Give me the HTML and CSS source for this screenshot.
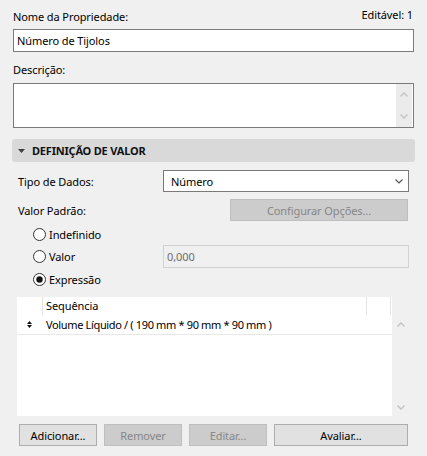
FILE: index.html
```html
<!DOCTYPE html>
<html lang="pt">
<head>
<meta charset="utf-8">
<link rel="stylesheet" href="styles.css">
</head>
<body>
<div class="dialog">
  <div class="head-row">
    <span>Nome da Propriedade:</span>
    <span class="editable">Editável: 1</span>
  </div>
  <div class="text-input">Número de Tijolos</div>
  <div class="label-desc">Descrição:</div>
  <div class="textarea">
    <div class="ta-scroll">
      <svg width="8" height="5" viewBox="0 0 8 5"><path d="M0.5 4.5 L4 1 L7.5 4.5" fill="none" stroke="#c2c2c2" stroke-width="1.3"/></svg>
      <svg width="8" height="5" viewBox="0 0 8 5"><path d="M0.5 0.5 L4 4 L7.5 0.5" fill="none" stroke="#c2c2c2" stroke-width="1.3"/></svg>
    </div>
  </div>

  <div class="section-head">
    <svg class="tri" width="7" height="4" viewBox="0 0 7 4"><path d="M0 0 H7 L3.5 4 Z" fill="#404040"/></svg>
    <span>DEFINIÇÃO DE VALOR</span>
  </div>

  <div class="section-body">
    <div class="row row-type">
      <span>Tipo de Dados:</span>
      <div class="dropdown">
        <span>Número</span>
        <svg width="8" height="5" viewBox="0 0 8 5"><path d="M0.5 0.5 L4 4 L7.5 0.5" fill="none" stroke="#555" stroke-width="1.2"/></svg>
      </div>
    </div>
    <div class="row row-default">
      <span>Valor Padrão:</span>
      <div class="btn btn-disabled btn-config">Configurar Opções...</div>
    </div>

    <div class="radio-row r1">
      <div class="radio-item">
        <svg width="13" height="13" viewBox="0 0 13 13"><circle cx="6.5" cy="6.5" r="6" fill="#fff" stroke="#333"/></svg>
        <span>Indefinido</span>
      </div>
    </div>
    <div class="radio-row r2">
      <div class="radio-item">
        <svg width="13" height="13" viewBox="0 0 13 13"><circle cx="6.5" cy="6.5" r="6" fill="#fff" stroke="#333"/></svg>
        <span>Valor</span>
      </div>
      <div class="value-input">0,000</div>
    </div>
    <div class="radio-row r3">
      <div class="radio-item">
        <svg width="13" height="13" viewBox="0 0 13 13"><circle cx="6.5" cy="6.5" r="6" fill="#fff" stroke="#333"/><circle cx="6.5" cy="6.5" r="3.2" fill="#111"/></svg>
        <span>Expressão</span>
      </div>
    </div>

    <div class="list">
      <div class="list-main">
        <div class="list-header">
          <div class="col-icon"></div>
          <div class="col-seq">Sequência</div>
          <div class="col-end"></div>
        </div>
        <div class="list-row">
          <div class="col-icon">
            <svg width="5" height="7" viewBox="0 0 5 7"><path d="M0 3 L2.5 0 L5 3 Z M0 4 L5 4 L2.5 7 Z" fill="#111"/></svg>
          </div>
          <div class="row-text">Volume Líquido / ( 190 mm * 90 mm * 90 mm )</div>
        </div>
      </div>
      <div class="list-scroll">
        <svg width="8" height="5" viewBox="0 0 8 5"><path d="M0.5 4.5 L4 1 L7.5 4.5" fill="none" stroke="#c2c2c2" stroke-width="1.3"/></svg>
        <svg width="8" height="5" viewBox="0 0 8 5"><path d="M0.5 0.5 L4 4 L7.5 0.5" fill="none" stroke="#c2c2c2" stroke-width="1.3"/></svg>
      </div>
    </div>

    <div class="buttons">
      <div class="btn btn-small">Adicionar...</div>
      <div class="btn btn-small btn-disabled">Remover</div>
      <div class="btn btn-small btn-disabled">Editar...</div>
      <div class="btn btn-wide">Avaliar...</div>
    </div>
  </div>
</div>
</body>
</html>
```

FILE: styles.css
```css
* { box-sizing: border-box; }

body {
  margin: 0;
  background: #f0f0f0;
  font-family: "Noto Sans", "Open Sans", sans-serif;
  font-size: 11px;
  letter-spacing: -0.1px;
  color: #000;
}

.dialog {
  width: 427px;
  height: 456px;
  padding: 9px 13px 0 13px;
  display: flex;
  flex-direction: column;
}

.head-row {
  display: flex;
  justify-content: space-between;
  align-items: flex-start;
  height: 16px;
  line-height: 16px;
}

.editable {
  margin-top: -2px;
  margin-right: 1px;
}

.text-input {
  margin-top: 4px;
  height: 23px;
  border: 1px solid #7a7a7a;
  background: #fff;
  padding: 0 3px;
  display: flex;
  align-items: center;
}

.label-desc {
  margin-top: 10px;
  line-height: 16px;
}

.textarea {
  margin-top: 5px;
  height: 45px;
  border: 1px solid #7a7a7a;
  background: #fff;
  display: flex;
  justify-content: flex-end;
}

.ta-scroll {
  width: 16px;
  margin-right: 1px;
  background: #ebebeb;
  display: flex;
  flex-direction: column;
  justify-content: space-between;
  align-items: center;
  padding: 8px 0 8px;
}

.section-head {
  margin: 11px -1px 0 -1px;
  height: 23px;
  background: #d9d9d9;
  border-radius: 3px;
  display: flex;
  align-items: center;
  gap: 7px;
  padding-left: 6px;
  font-weight: bold;
  letter-spacing: -0.2px;
  color: #111;
}

.section-body {
  padding: 0 5px;
  display: flex;
  flex-direction: column;
}

.row {
  display: flex;
  align-items: center;
  justify-content: space-between;
}

.row-type {
  margin-top: 8px;
  height: 22px;
}

.dropdown {
  width: 246px;
  height: 22px;
  border: 1px solid #7a7a7a;
  background: #fff;
  display: flex;
  align-items: center;
  justify-content: space-between;
  padding: 0 5px 0 7px;
}

.row-default {
  margin-top: 7px;
  height: 22px;
}

.btn {
  height: 22px;
  border: 1px solid #adadad;
  background: #e1e1e1;
  display: flex;
  align-items: center;
  justify-content: center;
}

.btn-disabled {
  background: #cccccc;
  border-color: #bfbfbf;
  color: #878787;
}

.btn-config {
  width: 178px;
  margin-right: 1px;
}

.radio-row {
  display: flex;
  align-items: center;
  justify-content: space-between;
  padding-left: 15px;
}

.r1 { margin-top: 3px; height: 21px; }
.r2 { height: 23px; }
.r3 { height: 22px; }

.radio-item {
  display: flex;
  align-items: center;
  gap: 3px;
}

.radio-item svg { display: block; }

.value-input {
  width: 246px;
  height: 23px;
  border: 1px solid #d2d2d2;
  background: #f0f0f0;
  color: #6d6d6d;
  display: flex;
  align-items: center;
  padding-left: 3px;
}

.list {
  margin: 7px -1px 0 -1px;
  height: 119px;
  display: flex;
}

.list-main {
  width: 375px;
  background: #fff;
  display: flex;
  flex-direction: column;
}

.list-header {
  height: 18px;
  display: flex;
  margin-right: 1px;
}

.list-header .col-icon {
  width: 26px;
  border-right: 1px solid #e3e3e3;
}

.col-seq {
  width: 324px;
  border-right: 1px solid #e3e3e3;
  padding-left: 3px;
  line-height: 18px;
}

.col-end {
  flex: 1;
  border-right: 1px solid #e3e3e3;
}

.list-row {
  height: 20px;
  border-bottom: 1px solid #e8e8e8;
  display: flex;
  align-items: center;
}

.list-row .col-icon {
  width: 26px;
  display: flex;
  justify-content: center;
}

.list-row .col-icon svg { display: block; margin-left: -1px; }

.row-text {
  padding-left: 3px;
  letter-spacing: -0.35px;
}

.list-scroll {
  flex: 1;
  display: flex;
  flex-direction: column;
  justify-content: space-between;
  align-items: center;
  padding: 25px 0 6px;
}

.buttons {
  margin: 8px 1px 0 1px;
  display: flex;
  gap: 7px;
}

.btn-small { width: 78px; }
.btn-wide { flex: 1; }
```
